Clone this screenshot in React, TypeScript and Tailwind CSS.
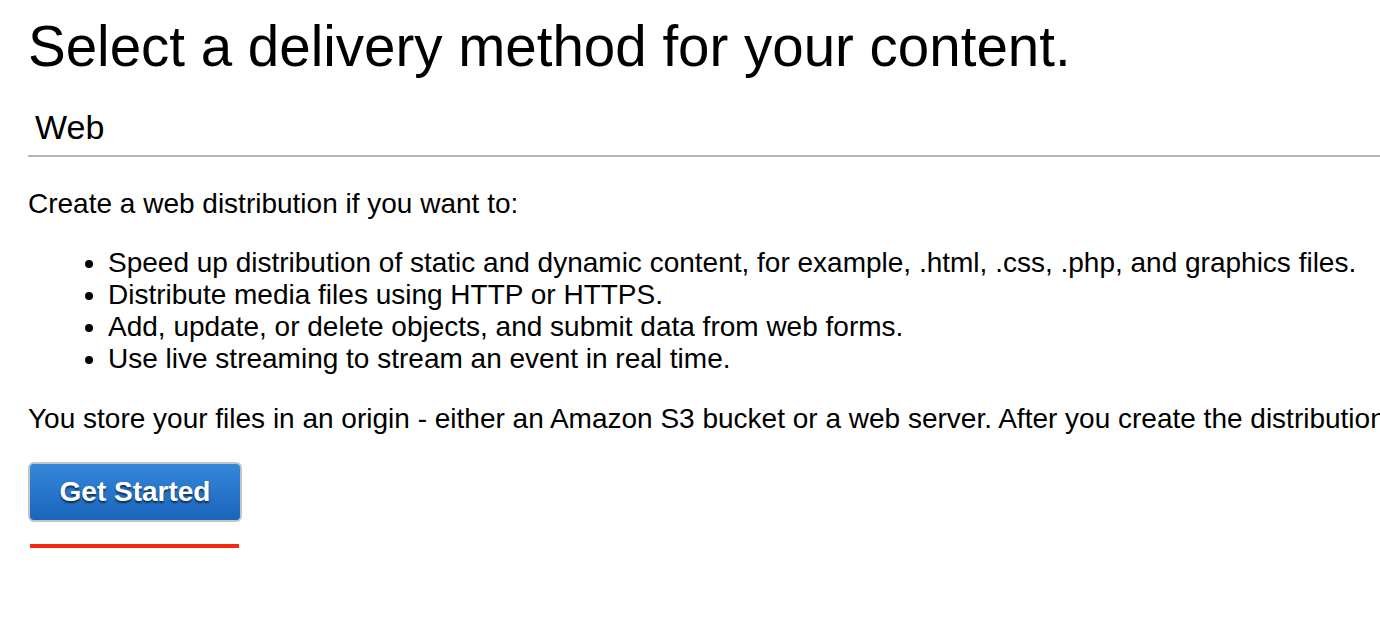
const bullets = [
  "Speed up distribution of static and dynamic content, for example, .html, .css, .php, and graphics files.",
  "Distribute media files using HTTP or HTTPS.",
  "Add, update, or delete objects, and submit data from web forms.",
  "Use live streaming to stream an event in real time.",
];

export default function App() {
  return (
    <div className="w-[1380px] h-[618px] overflow-hidden bg-white text-black font-['Liberation_Sans',Arial,sans-serif]">
      <div className="pl-[28px] pt-[15px]">
        <h1 className="text-[56.5px] leading-[64px] whitespace-nowrap">
          Select a delivery method for your content.
        </h1>

        <div className="mt-[26px] border-b-2 border-[#b5b5b5] pt-[2px] pb-[8px] pl-[7px]">
          <h2 className="text-[34px] leading-[40px]">Web</h2>
        </div>

        <p className="mt-[31px] text-[28px] leading-[32px] whitespace-nowrap">
          Create a web distribution if you want to:
        </p>

        <ul className="mt-[27px] pl-[80px] list-disc text-[28px] leading-[32px] whitespace-nowrap">
          {bullets.map((b) => (
            <li key={b}>{b}</li>
          ))}
        </ul>

        <p className="mt-[28px] text-[28px] leading-[32px] whitespace-nowrap">
          You store your files in an origin - either an Amazon S3 bucket or a web server. After you create the distribution, you can add more origins to the distribution.
        </p>

        <button className="mt-[27px] w-[214px] h-[60px] rounded-[6px] border-2 border-[#c4c4c4] bg-gradient-to-b from-[#3587da] to-[#1965bb] text-white text-[28px] font-bold [text-shadow:0_2px_2px_rgba(0,0,0,0.6)]">
          Get Started
        </button>

        <div className="mt-[22px] ml-[2px] w-[209px] h-[4px] bg-[#f52a0c]" />
      </div>
    </div>
  );
}
